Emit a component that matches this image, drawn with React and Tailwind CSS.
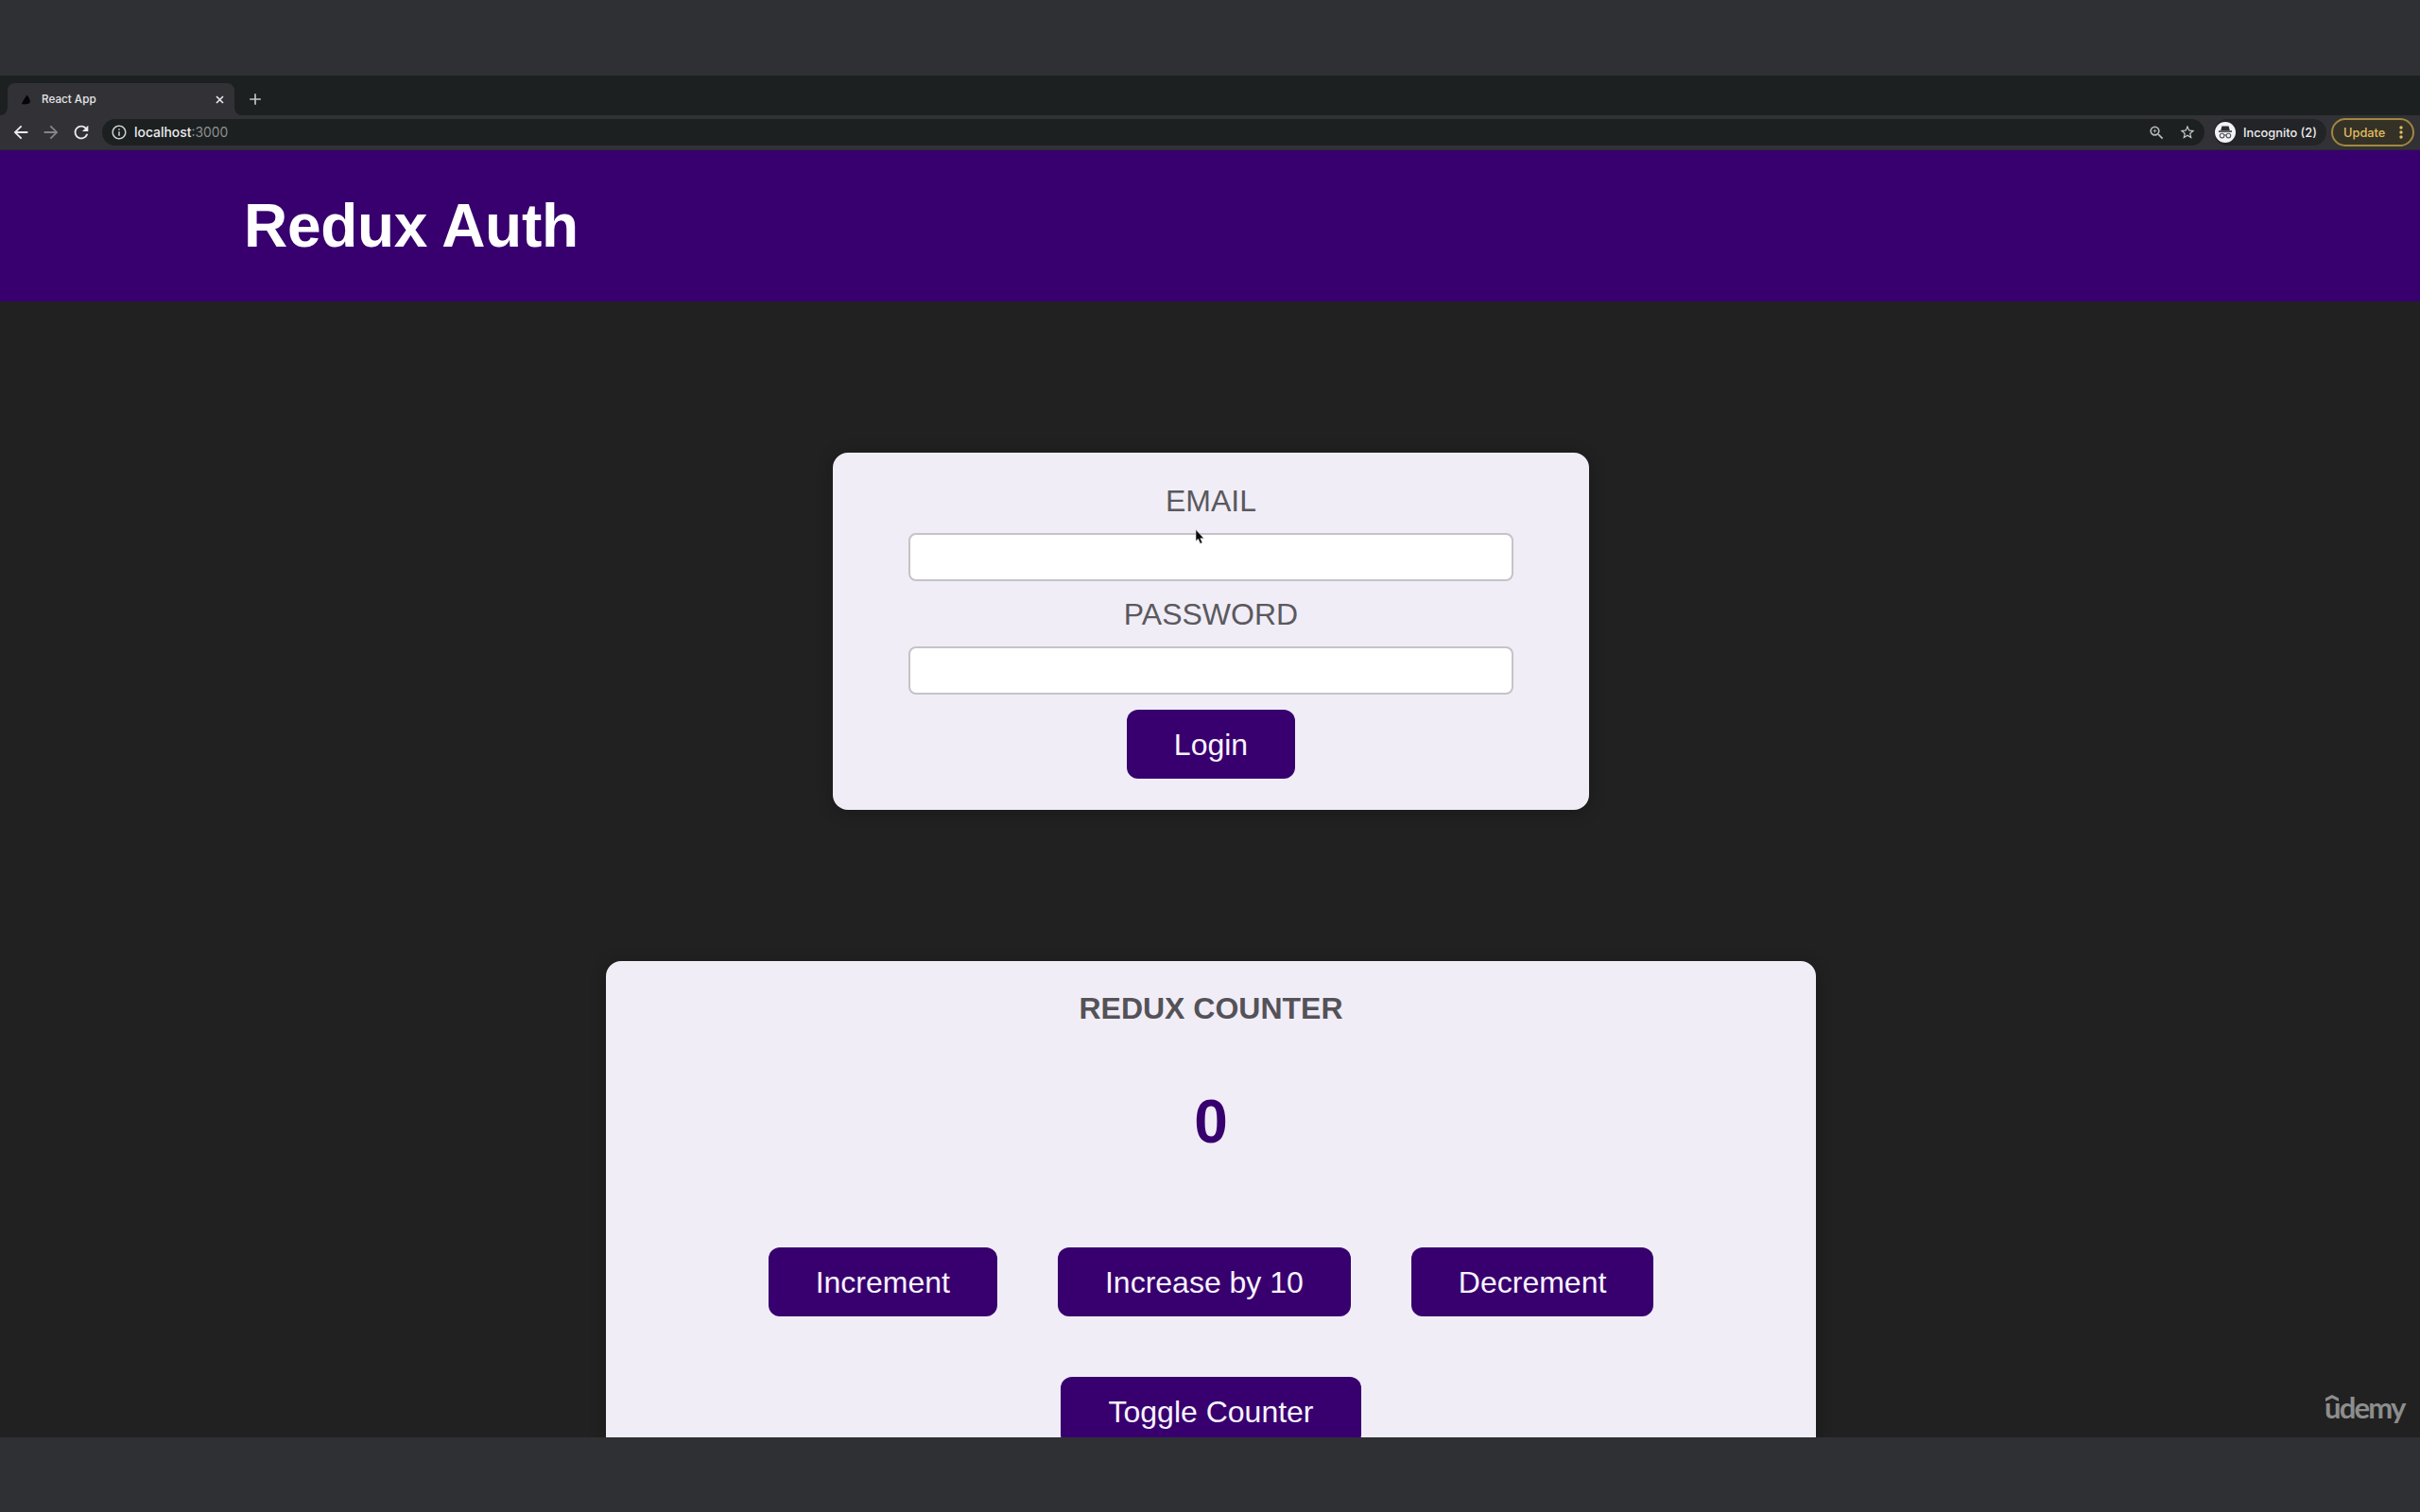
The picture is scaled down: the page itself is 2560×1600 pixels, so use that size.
import React from "react";
import {
  MdAdd,
  MdArrowBack,
  MdArrowForward,
  MdInfoOutline,
  MdMoreVert,
  MdRefresh,
  MdStarBorder,
  MdZoomIn,
} from "react-icons/md";

function TabStrip() {
  return (
    <div className="flex h-[42px] items-end bg-[#1c2021] pl-2">
      <div className="relative flex h-[34px] w-[240px] items-center rounded-t-[8px] bg-[#323236] pl-[14px] pr-[11px]">
        <svg className="absolute bottom-0 -left-2 h-2 w-2" viewBox="0 0 8 8">
          <path d="M8 0v8H0a8 8 0 0 0 8-8z" fill="#323236" />
        </svg>
        <svg className="absolute bottom-0 -right-2 h-2 w-2" viewBox="0 0 8 8">
          <path d="M0 0v8h8a8 8 0 0 1-8-8z" fill="#323236" />
        </svg>
        <svg className="h-3 w-[11px]" viewBox="0 0 11 12">
          <path d="M6.500 1.500c1.500 1.500 3.300 4.500 3.500 7.500-.5 2-7 3-9 2C1.500 9 4 5 6.500 1.500z" fill="#050505" />
        </svg>
        <span className="ml-[11px] pt-[1px] text-[11.700px] font-medium text-[#e6e6e8]">React App</span>
        <svg className="mt-[1px] ml-auto h-[9px] w-[9px]" viewBox="0 0 9 9">
          <path d="M1 1l7 7M8 1L1 8" stroke="#e6e6e8" strokeWidth="1.700" />
        </svg>
      </div>
      <div className="ml-[12px] flex h-[34px] items-center">
        <MdAdd className="text-[20px] text-[#c4c6c8]" />
      </div>
    </div>
  );
}

function IncognitoBadge() {
  return (
    <svg className="h-[22px] w-[22px]" viewBox="0 0 22 22">
      <circle cx="11" cy="11" r="11" fill="#f3f3f5" />
      <path d="M7.400 4.500h7.200l1.200 4.500H6.200z" fill="#2c2d31" />
      <path d="M4 9.300h14v1.500H4z" fill="#2c2d31" />
      <circle cx="7.600" cy="14.600" r="2.300" fill="none" stroke="#55565b" strokeWidth="1.100" />
      <circle cx="14.400" cy="14.600" r="2.300" fill="none" stroke="#55565b" strokeWidth="1.100" />
      <path d="M9.900 14.200q1.100-.7 2.200 0" fill="none" stroke="#55565b" strokeWidth="1.100" />
    </svg>
  );
}

function Toolbar() {
  return (
    <div className="flex h-[37px] items-center border-b border-[#29292c] bg-[#323236] pr-[6px] pl-[11px]">
      <MdArrowBack className="text-[22px] text-[#ececee]" />
      <MdArrowForward className="ml-[10px] text-[22px] text-[#84858a]" />
      <MdRefresh className="ml-[10px] text-[22px] text-[#ececee]" />
      <div className="ml-[11px] flex h-[28px] flex-1 items-center rounded-full bg-[#1c2021] pr-[9px] pl-[9px]">
        <MdInfoOutline className="text-[18px] text-[#d0d1d3]" />
        <span className="ml-[7px] text-[13.900px] font-medium text-[#ededf0]">
          localhost<span className="font-normal text-[#8d8f92]">:3000</span>
        </span>
        <MdZoomIn className="ml-auto text-[19px] text-[#b9bbbd]" />
        <MdStarBorder className="ml-[14px] text-[18px] text-[#c9cacc]" />
      </div>
      <div className="ml-[10px] flex h-[28px] w-[119px] items-center rounded-full bg-[#222427] pl-[1px]">
        <IncognitoBadge />
        <span className="ml-[8px] pt-[1px] whitespace-nowrap text-[12.800px] font-medium text-[#ececee]">Incognito (2)</span>
      </div>
      <div className="ml-[5px] flex h-[30px] w-[88px] items-center rounded-full border-2 border-[#a2883f] bg-[#343127] pl-[11px]">
        <span className="pt-[1px] text-[12.800px] font-medium text-[#e2bd5f]">Update</span>
        <MdMoreVert className="ml-[7px] shrink-0 text-[20px] text-[#e2bd5f]" />
      </div>
    </div>
  );
}

function Button({ children }) {
  return (
    <button className="h-[73px] rounded-[12px] bg-[#37006e] px-[50px] pt-[1px] text-[32px] leading-[37px] text-[#f9f3fd]">
      {children}
    </button>
  );
}

function Field({ label, type }) {
  return (
    <label className="mb-4 flex w-[640px] flex-col items-center">
      <span className="mb-[15px] pt-[1px] text-[32px] leading-[37px] text-[#5a595e]">{label}</span>
      <input type={type} className="h-[51px] w-full rounded-[8px] border-2 border-[#c5c3c8] bg-white" />
    </label>
  );
}

function Pointer() {
  return (
    <svg className="absolute top-[560px] left-[1264px] h-[18px] w-[12px]" viewBox="0 0 12 18">
      <path
        d="M1 0.500v12l2.500-2.200 2.200 4.900 2.200-.9-2.100-4.600H9.500z"
        fill="#0a0a0a"
        stroke="#dcdae0"
        strokeWidth=".6"
      />
    </svg>
  );
}

function Watermark() {
  return (
    <div className="absolute top-[1466px] left-[2459px] text-[#8d8d8d]">
      <svg className="absolute top-[10px] left-[1px] h-[7px] w-[14px]" viewBox="0 0 14 7">
        <path d="M7 0l7 3.500V7L7 3.500 0 7V3.500z" fill="currentColor" />
      </svg>
      <span className="font-['Lato'] text-[31px] leading-[46px] font-bold tracking-[-1.800px]">udemy</span>
    </div>
  );
}

export default function App() {
  return (
    <div className="relative flex h-[1600px] w-[2560px] flex-col overflow-hidden bg-[#2f3033]">
      <div className="mt-[80px] font-['Inter',sans-serif]">
        <TabStrip />
        <Toolbar />
      </div>
      <div className="flex h-[1362px] flex-col overflow-hidden bg-[#212121] font-['Liberation_Sans',Arial,sans-serif]">
        <header className="flex h-[160px] shrink-0 items-center bg-[#37006e] px-[10%]">
          <h1 className="ml-[2px] text-[64px] leading-[74px] font-bold tracking-[-0.300px] text-white">Redux Auth</h1>
        </header>
        <main className="flex flex-col items-center gap-[160px] pt-[160px] pl-[2px]">
          <form className="flex w-[800px] flex-col items-center rounded-[16px] bg-[#f1edf7] pt-8 pb-[33px] shadow-[0_2px_16px_2px_rgba(0,0,0,0.2)]">
            <Field label="EMAIL" type="email" />
            <Field label="PASSWORD" type="password" />
            <Button>Login</Button>
          </form>
          <section className="flex w-[1280px] flex-col items-center rounded-[16px] bg-[#f1edf7] py-8 shadow-[0_2px_16px_2px_rgba(0,0,0,0.2)]">
            <h2 className="text-[32px] leading-[37px] font-bold text-[#545257]">REDUX COUNTER</h2>
            <div className="mt-16 mb-24 text-[64px] leading-[74px] font-bold text-[#37006e]">0</div>
            <div className="mb-16 flex gap-16">
              <Button>Increment</Button>
              <Button>Increase by 10</Button>
              <Button>Decrement</Button>
            </div>
            <Button>Toggle Counter</Button>
          </section>
        </main>
      </div>
      <Pointer />
      <Watermark />
    </div>
  );
}
